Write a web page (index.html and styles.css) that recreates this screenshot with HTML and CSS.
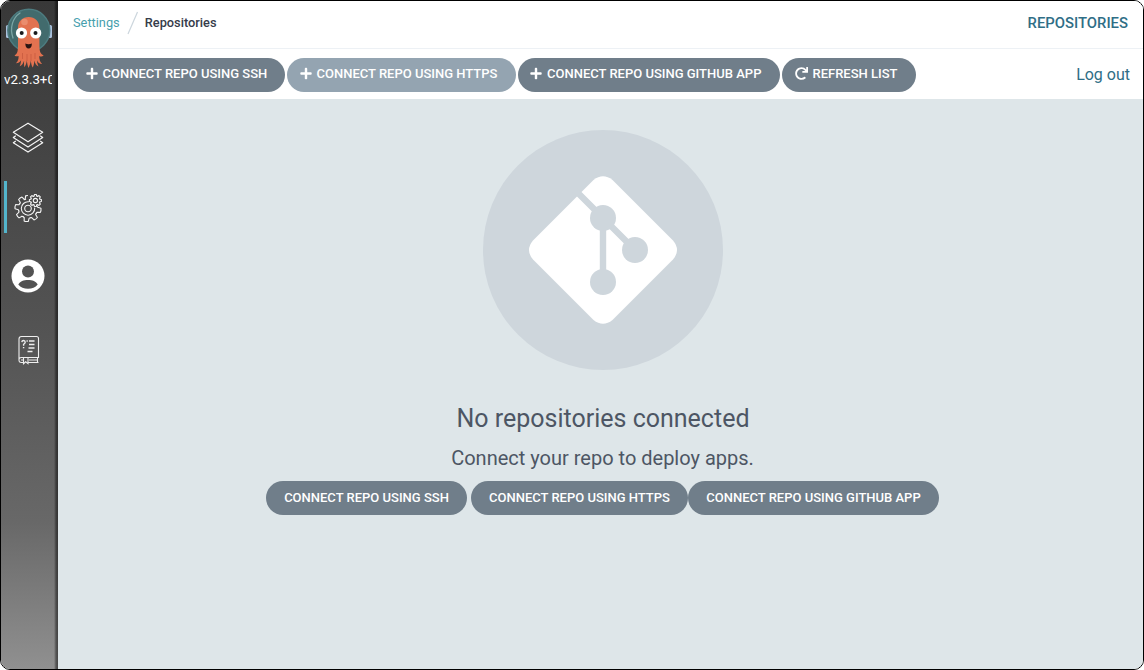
FILE: index.html
```html
<!DOCTYPE html>
<html lang="en">
<head>
<meta charset="utf-8">
<title>Repositories</title>
<link rel="stylesheet" href="styles.css">
</head>
<body>
<svg class="defs" width="0" height="0" aria-hidden="true">
  <symbol id="plus" viewBox="0 0 448 512"><path fill="currentColor" d="M416 208H272V64c0-17.67-14.33-32-32-32h-32c-17.67 0-32 14.33-32 32v144H32c-17.67 0-32 14.33-32 32v32c0 17.67 14.33 32 32 32h144v144c0 17.67 14.33 32 32 32h32c17.67 0 32-14.33 32-32V304h144c17.67 0 32-14.33 32-32v-32c0-17.67-14.33-32-32-32z"/></symbol>
  <symbol id="redo" viewBox="0 0 512 512"><path fill="currentColor" d="M500.33 0h-47.41a12 12 0 0 0-12 12.57l4 82.76A247.42 247.42 0 0 0 256 8C119.34 8 7.9 119.53 8 256.19 8.1 393.07 119.1 504 256 504a247.1 247.1 0 0 0 166.18-63.91 12 12 0 0 0 .48-17.43l-34-34a12 12 0 0 0-16.38-.55A176 176 0 1 1 402.1 157.8l-101.53-4.87a12 12 0 0 0-12.57 12v47.41a12 12 0 0 0 12 12h200.33a12 12 0 0 0 12-12V12a12 12 0 0 0-12-12z"/></symbol>
</svg>
<div class="window">
  <nav class="sidebar">
    <svg class="logo" width="56" height="71" viewBox="0 0 56 71">
      <rect x="5" y="24" width="4" height="13" rx="1.500" fill="#a9c0dc"/>
      <rect x="47" y="24" width="4" height="13" rx="1.500" fill="#a9c0dc"/>
      <circle cx="27.800" cy="29.300" r="21" fill="#426b6d" stroke="#4d7c80" stroke-width="1.400"/>
      <path d="M12 37c-3.500-10-.5-20 7-25" fill="none" stroke="#7ba5a5" stroke-width="1.300" stroke-linecap="round"/>
      <path d="M17 27c0-7 4.500-11 10.700-11s10.700 4 10.700 11v17c0 6 .8 9 4.300 10.500-1.600 1.200-3 1.200-4.500.4.200 3.600.8 6.300 3 8.100-2.800 0-4.400-1.500-5.200-3.800.1 2.800.8 4.600 1.600 6.300-2.500-.9-3.600-3.300-4.200-6-.2 2.800-.6 5-1.700 7-1.200-2-1.600-4.300-1.900-7-.4 2.600-1 5-2.200 7.400-1-2.200-1.500-4.600-1.700-7.400-.5 2.700-1.200 5-2.500 6.800-.5-2.200-.4-4.300-.3-6.600-.9 2.600-2.200 4.700-4.500 5.500.9-1.800 1.300-3.700 1.500-6-1.200 2-2.700 3-5.200 3 2.200-1.800 2.700-4.300 2.700-7.300-1.300.7-2.600.6-4.100-.4 3-1.500 3.500-4.500 3.500-10.500z" fill="#e27250"/>
      <circle cx="23.500" cy="21" r="3.300" fill="#ee9b7e" opacity=".65"/>
      <circle cx="20.500" cy="32" r="5.600" fill="#fff"/>
      <circle cx="34.700" cy="32" r="5.600" fill="#fff"/>
      <circle cx="20.700" cy="32" r="2" fill="#19191c"/>
      <circle cx="34.500" cy="32" r="2" fill="#19191c"/>
      <path d="M24.300 42.500q3.300 1.600 6.600 0-.2 5-3.300 5t-3.300-5z" fill="#291513"/>
      <path d="M21.500 52v6m4.500-5v7m4-7v7m4-8v6" stroke="#c4583c" stroke-width=".7"/>
    </svg>
    <div class="version">v2.3.3+07ac038</div>
    <a class="nav-item nav-apps">
      <svg width="34" height="34" viewBox="0 0 34 34" fill="none" stroke="#f4f4f4" stroke-width="1.200" stroke-linejoin="round">
        <path d="M17 2.200 31.700 11.300 17 20.800 2.300 11.300z"/>
        <path d="M4.800 14.800 2.300 16.500 17 25.900 31.700 16.500 29.200 14.800M4.800 20 2.300 21.700 17 31.100 31.700 21.700 29.200 20"/>
      </svg>
    </a>
    <a class="nav-item nav-settings">
      <svg width="30" height="30" viewBox="0 0 30 30" fill="none" stroke="#f4f4f4" stroke-width="1.100" stroke-linejoin="round" stroke-linecap="round">
        <defs>
          <path id="tooth" d="M8.780-3.640Q9.100-3 9.400-2.500L12.800-2.100Q13.400 0 12.800 2.100L9.400 2.500Q9.100 3 8.780 3.640"/>
          <path id="cog" d="M4.340-1.800 4.600-1.200 6-1 6 1 4.600 1.200 4.340 1.800"/>
        </defs>
        <g transform="translate(14 16.500)">
          <circle r="3.300"/>
          <use href="#tooth" transform="rotate(8)"/><use href="#tooth" transform="rotate(53)"/>
          <use href="#tooth" transform="rotate(98)"/><use href="#tooth" transform="rotate(143)"/>
          <use href="#tooth" transform="rotate(188)"/><use href="#tooth" transform="rotate(233)"/>
          <path d="M-3.800-8.700-2.800-9.200-2.400-12.600-.5-13"/>
          <path d="M.5-6.700A6.700 6.700 0 1 0 6.700-.5"/>
        </g>
        <g transform="translate(21.400 8.500)">
          <circle r="2.100"/>
          <use href="#cog"/><use href="#cog" transform="rotate(45)"/><use href="#cog" transform="rotate(90)"/><use href="#cog" transform="rotate(135)"/>
          <use href="#cog" transform="rotate(180)"/><use href="#cog" transform="rotate(225)"/><use href="#cog" transform="rotate(270)"/><use href="#cog" transform="rotate(315)"/>
        </g>
      </svg>
    </a>
    <a class="nav-item nav-user">
      <svg width="34" height="34" viewBox="0 0 34 34">
        <circle cx="17" cy="17" r="16.500" fill="#fff"/>
        <circle cx="17" cy="12.600" r="6" fill="#525252"/>
        <path d="M7.300 25.500c1.500-3.200 5.500-4.500 9.700-4.500s8.200 1.300 9.700 4.500c-2.300 3-5.700 4.300-9.700 4.300s-7.400-1.300-9.700-4.300z" fill="#525252"/>
      </svg>
    </a>
    <a class="nav-item nav-docs">
      <svg width="22" height="30" viewBox="0 0 22 30" fill="none" stroke="#eee" stroke-width="1.100">
        <path d="M5.500 27.500H3.300Q1 27.500 1 25V4Q1 1.500 3.500 1.500H18.500Q20.500 1.500 20.500 3.500V22.500H3.300Q1 22.500 1 25M10 27.500H20.500M19.500 22.500V27.500M5.500 23V28.700L7.700 26.800 10 28.700V23M3 25H5M11 25H19"/>
        <path d="M8.500 6H9.800M11 6H16.500M11 9.500H16.500M10.500 13H16.500M9.500 16.500H14.500" stroke-width="1.300"/>
        <path d="M3.800 7.200Q4 5.500 5.600 5.500T7.200 7.300Q7.200 8.300 5.600 9.300V10.700M5.600 12V13.300" stroke-width="1.400"/>
      </svg>
    </a>
  </nav>
  <main class="page">
    <header class="topbar">
      <div class="crumbs">
        <a class="crumb-link">Settings</a>
        <svg class="slash" width="12" height="24" viewBox="0 0 12 24"><path d="M10.500 1 1 23" stroke="#ccd6dd" stroke-width="1.200"/></svg>
        <span class="crumb-current">Repositories</span>
      </div>
      <div class="page-title">REPOSITORIES</div>
    </header>
    <div class="toolbar">
      <div class="actions">
        <button class="btn btn-icon b-ssh"><svg class="icon"><use href="#plus"/></svg>CONNECT REPO USING SSH</button>
        <button class="btn btn-icon b-https btn-hover"><svg class="icon"><use href="#plus"/></svg>CONNECT REPO USING HTTPS</button>
        <button class="btn btn-icon b-app"><svg class="icon"><use href="#plus"/></svg>CONNECT REPO USING GITHUB APP</button>
        <button class="btn btn-icon b-refresh"><svg class="icon icon-redo"><use href="#redo"/></svg>REFRESH LIST</button>
      </div>
      <a class="logout">Log out</a>
    </div>
    <section class="empty">
      <svg class="git" width="240" height="240" viewBox="0 0 240 240">
        <circle cx="120" cy="120" r="120" fill="#ced6dc"/>
        <path d="M110.500 50Q120 42.500 129.500 50L190 110.500Q198 120 190 129.500L129.500 190Q120 197.500 110.500 190L50 129.500Q42 120 50 110.500z" fill="#fff"/>
        <path d="M92 60 120 88 152 120M120 88V152" fill="none" stroke="#ced6dc" stroke-width="6.400"/>
        <g fill="#ced6dc"><circle cx="120" cy="88" r="13"/><circle cx="152" cy="120" r="13"/><circle cx="120" cy="152" r="13"/></g>
      </svg>
      <h4 class="empty-title">No repositories connected</h4>
      <h5 class="empty-text">Connect your repo to deploy apps.</h5>
      <div class="empty-actions">
        <button class="btn e-ssh">CONNECT REPO USING SSH</button>
        <button class="btn e-https">CONNECT REPO USING HTTPS</button>
        <button class="btn e-app">CONNECT REPO USING GITHUB APP</button>
      </div>
    </section>
  </main>
</div>
</body>
</html>
```
FILE: styles.css
```css
* { box-sizing: border-box; }
body { margin: 0; background: #fff; font-family: Roboto, "Liberation Sans", sans-serif; }
.defs { position: absolute; }
.window {
  display: flex;
  width: 1144px;
  height: 670px;
  border: 1px solid #000;
  border-radius: 10px;
  overflow: hidden;
}
.sidebar {
  display: flex;
  flex-direction: column;
  width: 57px;
  flex: none;
  background:
    linear-gradient(to left, rgba(0, 0, 0, .5) 0, rgba(0, 0, 0, .4) 2px, rgba(0, 0, 0, 0) 4px),
    linear-gradient(#383838 0, #474747 27%, #545454 50%, #686868 78%, #909090 100%);
}
.logo { flex: none; }
.version {
  width: 48px;
  height: 16px;
  margin-left: 3px;
  overflow: hidden;
  white-space: nowrap;
  color: #fff;
  font-size: 13.3px;
  line-height: 16px;
}
.nav-item {
  display: flex;
  align-items: center;
  justify-content: center;
  width: 54px;
  height: 52px;
}
.nav-apps { margin-top: 24px; }
.nav-settings { margin: 17px 0 0 3px; width: 51px; padding-right: 4px; border-left: 3px solid #53b5cc; }
.nav-user { margin-top: 17px; }
.nav-docs { margin-top: 22px; width: 56px; }
.page { flex: 1; display: flex; flex-direction: column; background: #dee6e9; }
.topbar {
  display: flex;
  justify-content: space-between;
  align-items: center;
  height: 48px;
  padding: 0 15px 4px 15px;
  background: #fff;
  border-bottom: 1px solid #edf1f5;
}
.crumbs { display: flex; align-items: center; font-size: 12.8px; }
.crumb-link { color: #489fae; }
.slash { margin: 0 6px 0 7px; }
.crumb-current { color: #363c4a; font-weight: 500; }
.page-title { color: #2f6e86; font-size: 14.85px; font-weight: 500; }
.toolbar {
  display: flex;
  align-items: center;
  justify-content: space-between;
  height: 50px;
  padding: 0 13px 0 15px;
  background: #fff;
}
.actions { display: flex; gap: 2px; padding-top: 1px; }
.btn {
  display: flex;
  align-items: center;
  justify-content: center;
  height: 34px;
  padding: 0 0 1px;
  border: 0;
  border-radius: 17px;
  background: #707e8a;
  color: #fff;
  font: 500 13px Roboto, "Liberation Sans", sans-serif;
  white-space: nowrap;
}
.btn-icon { justify-content: flex-start; padding: 0 0 2px 12.5px; }
.btn-hover { background: #94a4b1; }
.icon { width: 12px; height: 13px; margin-right: 5px; flex: none; }
.icon-redo { width: 13px; }
.b-ssh { width: 212px; }
.b-https { width: 228.5px; }
.b-app { width: 262px; }
.b-refresh { width: 134.5px; padding-left: 13px; }
.logout { color: #2f6e86; font-size: 16px; }
.empty {
  display: flex;
  flex-direction: column;
  align-items: center;
  padding: 31px 0 0 4px;
}
.empty-title { margin: 32px 0 0 1px; color: #4d5664; font-size: 25px; font-weight: 400; line-height: 34px; }
.empty-text { margin: 9px 0 0; color: #4d5664; font-size: 20px; font-weight: 400; line-height: 26px; }
.empty-actions { display: flex; margin-top: 10px; }
.e-ssh { width: 201px; margin-right: 4px; }
.e-https { width: 217px; }
.e-app { width: 251px; }
```
